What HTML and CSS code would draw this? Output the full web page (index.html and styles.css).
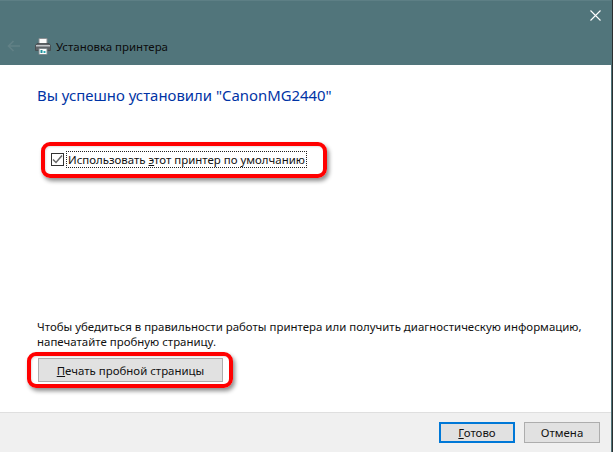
FILE: index.html
```html
<!DOCTYPE html>
<html lang="ru">
<head>
<meta charset="utf-8">
<title>Установка принтера</title>
<link rel="stylesheet" href="styles.css">
</head>
<body>
<div class="window">
  <header class="titlebar">
    <div class="close-row">
      <svg class="close" width="11" height="11" viewBox="0 0 11 11"><path d="M.5.5l10 10M10.5.5l-10 10" stroke="#fff" stroke-width="1.1" fill="none"/></svg>
    </div>
    <div class="nav-row">
      <svg class="back" width="14" height="12" viewBox="0 0 14 12"><path d="M13 6H1.5M6.5 1L1.5 6l5 5" stroke="#628186" stroke-width="1.6" fill="none"/></svg>
      <svg class="printer" width="16" height="17" viewBox="0 0 16 17">
        <path d="M4 .5h8v6H4z" fill="#fcfcfc" stroke="#8b8f92"/>
        <path d="M2 5.500h12l1.500 2v5h-15v-5z" fill="#5f6468" stroke="#44494d" stroke-width=".8"/>
        <path d="M1 7h14v1.500H1z" fill="#c3c7ca"/>
        <path d="M4 10.500h8v6H4z" fill="#fff" stroke="#7f8a8e"/>
        <path d="M5.500 12h2v3h-2z" fill="#1f8f99"/>
        <path d="M8.500 13h2v2h-2z" fill="#2aa7b0"/>
      </svg>
      <span class="window-title">Установка принтера</span>
    </div>
  </header>
  <main class="content">
    <h1 class="heading">Вы успешно установили "CanonMG2440"</h1>
    <label class="check-row">
      <span class="checkbox"><svg width="11" height="11" viewBox="0 0 11 11"><path d="M1 5.500l3 3 6-7" stroke="#666" stroke-width="1.500" fill="none"/></svg></span>
      <span class="check-label">Использовать <u>э</u>тот принтер по умолчанию</span>
    </label>
    <div class="spacer"></div>
    <p class="info">Чтобы убедиться в правильности работы принтера или получить диагностическую информацию, напечатайте пробную страницу.</p>
    <button class="btn btn-test" type="button"><u>П</u>ечать пробной страницы</button>
  </main>
  <footer class="footer">
    <button class="btn btn-default" type="button"><u>Г</u>отово</button>
    <button class="btn" type="button">Отмена</button>
  </footer>
  <div class="mark mark-check"></div>
  <div class="mark mark-button"></div>
</div>
</body>
</html>
```
FILE: styles.css
```css
* { box-sizing: border-box; }
html, body { margin: 0; height: 100%; background: #2b2f30; overflow: hidden; }
body { font-family: "Noto Sans", "Open Sans", sans-serif; font-size: 11.450px; color: #111; }
.window {
  position: relative;
  width: 612px;
  height: 452px;
  background: #fff;
  border-right: 1px solid #51757b;
  display: flex;
  flex-direction: column;
}
.titlebar { height: 65px; background: #51757b; border-top: 1px solid #5d7f85; display: flex; flex-direction: column; flex: none; }
.close-row { height: 28px; display: flex; justify-content: flex-end; padding: 9px 10px 0 0; }
.nav-row { display: flex; align-items: center; height: 20px; margin-top: 7px; padding-left: 7px; }
.back { margin-right: 14px; }
.printer { margin-right: 5px; }
.window-title { color: #0c0c0c; }
.content { flex: 1; min-height: 0; display: flex; flex-direction: column; padding: 20px 0 0 37px; }
.heading { margin: 0; font-size: 14.900px; font-weight: 400; color: #0033a5; line-height: 21px; }
.check-row { display: flex; align-items: center; margin-top: 45px; margin-left: 14px; height: 16px; }
.checkbox { width: 13px; height: 13px; border: 1px solid #333; display: flex; align-items: center; justify-content: center; margin-right: 3px; background: #fff; flex: none; }
.check-label { outline: 1px dotted #222; padding: 0 1px; line-height: 15px; }
.spacer { flex: 1; }
.info { margin: 0; line-height: 15px; width: 560px; }
.btn {
  font-family: inherit;
  font-size: inherit;
  color: #111;
  height: 21px;
  width: 76px;
  background: #e1e1e1;
  border: 1px solid #adadad;
  padding: 0;
}
.btn-test { width: 185px; height: 24px; margin: 9px 0 30px 1px; flex: none; }
.btn-default { border: 2px solid #0078d7; }
.footer { height: 40px; flex: none; background: #f0f0f0; border-top: 1px solid #dfdfdf; display: flex; justify-content: flex-end; gap: 9px; align-items: center; padding-right: 11px; }
.mark { position: absolute; border: 4px solid #f00; border-radius: 9px; box-shadow: 2px 3px 4px rgba(0,0,0,.45), inset 1px 1px 2px rgba(0,0,0,.12); }
.mark-check { left: 41px; top: 142px; width: 286px; height: 36px; }
.mark-button { left: 27px; top: 352px; width: 206px; height: 36px; }
```
